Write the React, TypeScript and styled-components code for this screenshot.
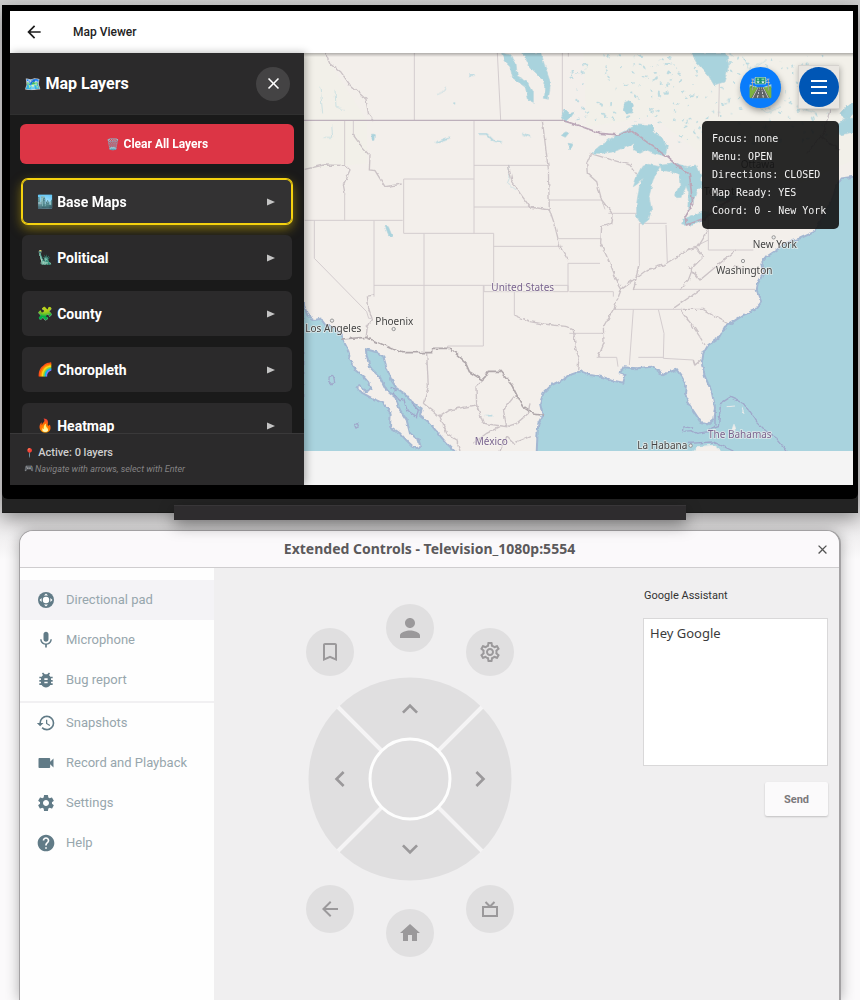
import React from "react";
import styled, { createGlobalStyle } from "styled-components";
import {
  MdMic, MdBugReport, MdHistory, MdVideocam, MdSettings, MdHelp, MdPerson,
  MdBookmarkBorder, MdOutlineSettings, MdHome, MdArrowBack, MdClose,
  MdKeyboardArrowUp, MdKeyboardArrowDown, MdKeyboardArrowLeft, MdKeyboardArrowRight,
} from "react-icons/md";

const GlobalStyle = createGlobalStyle`
  * { box-sizing: border-box; }
  body { margin: 0; background: #fafafa; font-family: Roboto, "Noto Sans", sans-serif; }
  button { font: inherit; border: 0; padding: 0; cursor: pointer; }
  h1, h2, p { margin: 0; padding: 0; }
`;

const Page = styled.div`
  display: flex;
  flex-direction: column;
  min-height: 100vh;
  padding-top: 5px;
  background: linear-gradient(#cfcfcf, #dcdadb 60px, #dcdadb 490px, #fbfafb 560px);
`;

/* ---------- television ---------- */

const Television = styled.section`
  margin: 0 2px;
  background: #232323;
  border-bottom: 1px solid #1b1b1b;
  padding-bottom: 13px;
  box-shadow: 0 6px 18px rgba(0, 0, 0, 0.38);
`;

const Bezel = styled.div`
  background: #000;
  padding: 6px 5px 14px 8px;
  border-radius: 0 0 6px 6px;
`;

const Stand = styled.div`
  position: relative;
  flex: none;
  width: calc(60% - 4px);
  height: 15px;
  margin: -8px auto 10px;
  background: #2e2c2e;
  border-top: 1px solid #383638;
  box-shadow: 0 5px 16px rgba(0, 0, 0, 0.4);
`;

const AppBar = styled.header`
  display: flex;
  align-items: center;
  gap: 29px;
  height: 42px;
  padding-left: 14px;
  background: #fff;
  color: #222;
`;

const BackButton = styled.button`
  display: flex;
  background: none;
  color: #1c1c1c;
  font-size: 20px;
`;

const AppTitle = styled.h1`
  font-size: 12px;
  font-weight: 500;
  line-height: 18px;
`;

const Viewer = styled.div`
  display: flex;
  height: 432px;
`;

const Drawer = styled.aside`
  position: relative;
  z-index: 1;
  flex: none;
  display: flex;
  flex-direction: column;
  width: 294px;
  background: #1a1a1a;
  color: #fff;
  box-shadow: 2px 0 8px rgba(0, 0, 0, 0.3);
`;

const DrawerHeader = styled.div`
  flex: none;
  display: flex;
  align-items: center;
  justify-content: space-between;
  height: 62px;
  padding: 0 14px;
  background: #2b2a2b;
  border-bottom: 1px solid #303030;
`;

const DrawerTitle = styled.h2`
  display: flex;
  align-items: center;
  gap: 4px;
  font-size: 16px;
  line-height: 20px;
  font-weight: 700;
`;

const CloseDrawer = styled.button`
  display: flex;
  align-items: center;
  justify-content: center;
  width: 34px;
  height: 34px;
  border-radius: 50%;
  background: #444344;
  color: #fff;
  font-size: 19px;
`;

const LayerList = styled.div`
  flex: 1;
  min-height: 0;
  overflow: hidden;
  display: flex;
  flex-direction: column;
  gap: 11px;
  padding: 9px 10px 0;
`;

const Emoji = styled.span<{ $size: number }>`
  display: inline-block;
  font-family: "Noto Color Emoji", sans-serif;
  font-size: ${(p) => p.$size}px;
  font-style: normal;
`;

const ClearButton = styled.button`
  flex: none;
  display: flex;
  align-items: center;
  justify-content: center;
  gap: 4px;
  height: 40px;
  margin-bottom: 4px;
  border-radius: 6px;
  background: #dc3545;
  color: #fff;
  font-size: 12px;
  font-weight: 700;
`;

const LayerButton = styled.button<{ $focused?: boolean }>`
  flex: none;
  display: flex;
  align-items: center;
  gap: 4px;
  height: 45px;
  margin: 0 2px;
  padding: 0 17px 0 15px;
  border-radius: 6px;
  background: ${(p) => (p.$focused ? "#333233" : "#2b2a2b")};
  box-shadow: ${(p) =>
    p.$focused
      ? "inset 0 0 0 1px #f5d20f, 0 0 0 1px #f5d20f, 0 4px 12px rgba(255, 215, 0, 0.5)"
      : "none"};
  color: #fff;
  font-size: 14px;
  font-weight: 700;
`;

const Caret = styled.svg`
  width: 8px;
  height: 8px;
  margin-left: auto;
  fill: #c4c4c4;
`;

const DrawerFooter = styled.div`
  flex: none;
  display: flex;
  flex-direction: column;
  gap: 2px;
  height: 52px;
  padding: 12px 14px 0;
  background: #2b2a2b;
  border-top: 1px solid #3a393a;
`;

const ActiveCount = styled.p`
  display: flex;
  align-items: center;
  gap: 3px;
  font-size: 11px;
  line-height: 14px;
  font-weight: 500;
  color: #cfcfcf;
`;

const NavHint = styled.p`
  display: flex;
  align-items: center;
  gap: 1px;
  font-size: 9px;
  line-height: 14px;
  font-style: italic;
  color: #858485;
`;

const MapArea = styled.main`
  position: relative;
  flex: 1;
  min-width: 0;
  background: #f4f4f4;

  &::before {
    content: "";
    position: absolute;
    inset: 0 0 auto;
    height: 4px;
    background: linear-gradient(rgba(0, 0, 0, 0.28), rgba(0, 0, 0, 0));
  }
`;

const MapCanvas = styled.svg`
  display: block;
  width: 100%;
  height: 398px;
`;

const MapTools = styled.div`
  position: absolute;
  top: 12px;
  right: 14px;
  display: flex;
  flex-direction: column;
  align-items: flex-end;
  gap: 12px;
`;

const ToolRow = styled.div`
  display: flex;
  align-items: center;
  gap: 17px;
`;

const DirectionsButton = styled.button`
  display: flex;
  align-items: center;
  justify-content: center;
  width: 41px;
  height: 41px;
  border-radius: 50%;
  background: #0a7cfb;
  box-shadow: 1px 3px 6px rgba(0, 0, 0, 0.35);
`;

const MenuFrame = styled.div`
  padding: 1px 0;
  border: 1px solid #d5d2ce;
  border-right: 0;
  background: #e9e6e1;
  box-shadow: 1px 2px 6px rgba(0, 0, 0, 0.3);
`;

const MenuButton = styled.button`
  display: flex;
  align-items: center;
  justify-content: center;
  width: 40px;
  height: 40px;
  border-radius: 50%;
  background: #0056b5;
`;

const DebugPanel = styled.div`
  min-width: 137px;
  padding: 9px 10px;
  border-radius: 5px;
  background: rgba(20, 20, 20, 0.91);
  color: #f2f2f2;
  font-family: "DejaVu Sans Mono", monospace;
  font-size: 10px;
  line-height: 18px;
  white-space: pre;
`;

/* ---------- extended controls window ---------- */

const Window = styled.section`
  flex: 1;
  display: flex;
  flex-direction: column;
  margin: 0 19px;
  border: 1px solid #a3a1a3;
  border-right-width: 2px;
  border-bottom: 0;
  border-radius: 14px 14px 0 0;
  background: #f0eff0;
  overflow: hidden;
  box-shadow: 0 1px 14px rgba(0, 0, 0, 0.3);
`;

const TitleBar = styled.header`
  flex: none;
  display: grid;
  grid-template-columns: 34px 1fr 34px;
  align-items: center;
  height: 37px;
  background: #fbf9fb;
  border-bottom: 1px solid #cfcdcf;
`;

const WindowTitle = styled.h2`
  grid-column: 2;
  text-align: center;
  font-family: "Noto Sans", sans-serif;
  font-size: 14px;
  line-height: 20px;
  font-weight: 700;
  color: #5b595b;
`;

const CloseWindow = styled.button`
  display: flex;
  justify-content: center;
  background: none;
  color: #555;
  font-size: 15px;
`;

const WindowBody = styled.div`
  flex: 1;
  display: flex;
`;

const SideNav = styled.nav`
  flex: none;
  width: 194px;
  padding-top: 12px;
  background: #fefefe;
`;

const NavDivider = styled.hr`
  height: 2px;
  margin: 1px 0 0;
  border: 0;
  background: #f1f0f2;
`;

const NavItem = styled.button<{ $active?: boolean }>`
  display: flex;
  align-items: center;
  gap: 10px;
  width: 100%;
  height: 40px;
  padding-left: 16px;
  background: ${(p) => (p.$active ? "#f4f3f6" : "transparent")};
  color: #97a6ad;

  svg {
    width: 20px;
    height: 20px;
    color: #617b87;
  }
`;

const NavText = styled.span`
  font-size: 13px;
  line-height: 18px;
`;

const Controls = styled.div`
  flex: 1;
  display: flex;
  justify-content: space-between;
  align-items: flex-start;
  padding: 20px 11px 0 92px;
`;

const Remote = styled.div`
  display: flex;
  flex-direction: column;
  align-items: center;
  width: 208px;
  margin-top: 16px;
`;

const KeyRow = styled.div<{ $flip?: boolean }>`
  display: flex;
  justify-content: space-between;
  align-items: ${(p) => (p.$flip ? "flex-start" : "flex-end")};
  width: 100%;
  height: 72px;

  > :nth-child(2) {
    align-self: ${(p) => (p.$flip ? "flex-end" : "flex-start")};
  }
`;

const RoundKey = styled.button<{ $icon: number }>`
  display: flex;
  align-items: center;
  justify-content: center;
  width: 48px;
  height: 48px;
  border-radius: 50%;
  background: #e0dfe0;
  color: #9b999b;
  font-size: ${(p) => p.$icon}px;
`;

const Dial = styled.div`
  position: relative;
  width: 204px;
  height: 204px;
  margin: 1px 0 4px;
`;

const DialFace = styled.svg`
  position: absolute;
  inset: 0;
`;

const DialKeys = styled.div`
  position: relative;
  display: grid;
  grid-template: 60px 80px 60px / 60px 80px 60px;
  grid-template-areas: ". up ." "left ok right" ". down .";
  height: 100%;
  padding: 2px;
`;

const DialKey = styled.button<{ $area: string }>`
  grid-area: ${(p) => p.$area};
  display: flex;
  align-items: center;
  justify-content: center;
  background: none;
  border-radius: 50%;
  color: #9a989a;
  font-size: 32px;
`;

const Assistant = styled.form`
  display: flex;
  flex-direction: column;
  width: 185px;
`;

const AssistantLabel = styled.label`
  margin: 1px 0 15px 1px;
  font-size: 11px;
  line-height: 14px;
  color: #333;
`;

const AssistantInput = styled.textarea`
  height: 148px;
  padding: 5px 6px;
  border: 1px solid #d9d8d9;
  border-radius: 0;
  resize: none;
  outline: 0;
  background: #fff;
  color: #3b3b3b;
  font-family: "Noto Sans", sans-serif;
  font-size: 13px;
  line-height: 18px;
`;

const SendButton = styled.button`
  align-self: flex-end;
  width: 63px;
  height: 34px;
  margin-top: 16px;
  border-radius: 2px;
  background: #fbfafb;
  box-shadow: 0 1px 2px rgba(0, 0, 0, 0.2);
  color: #7b797b;
  font-size: 11px;
  font-weight: 700;
`;

/* ---------- map ---------- */

const MapLabel = styled.text<{ $country?: boolean }>`
  font-family: "Noto Sans", sans-serif;
  font-size: 30px;
  fill: ${(p) => (p.$country ? "#79648f" : "#444")};
  stroke: #f6f3f0;
  stroke-width: 5px;
  stroke-opacity: 0.7;
  paint-order: stroke;
`;

const lakes = [
  "M875 310L900 290L940 260L990 235L1015 222L1055 225L1065 250L1090 265L1102 290L1095 318L1065 310L1040 300L1020 310L1000 300L1005 280L970 295L940 305L910 310Z",
  "M1025 350L1045 343L1080 350L1065 375L1057 400L1047 440L1055 480L1045 510L1025 525L1010 500L1010 460L1018 410L1030 385L1012 402L1000 410L1012 375Z",
  "M1078 343L1120 338L1160 350L1190 345L1205 380L1205 410L1190 422L1178 460L1163 480L1166 430L1158 408L1145 445L1130 446L1124 436L1140 405L1138 375L1110 365L1085 360Z",
  "M1145 522L1150 508L1210 482L1230 490L1215 508L1180 526Z",
  "M1240 440L1300 420L1330 430L1300 450L1250 455Z",
  "M668 8L722 8L735 50L752 100L745 148L733 145L737 110L720 80L690 52Z",
  "M605 10L632 14L648 40L652 78L680 92L700 125L700 157L685 150L676 112L655 96L638 84L630 50L615 36Z",
  "M1172 8L1280 8L1286 50L1272 96L1242 105L1226 78L1212 62L1190 38Z",
  "M975 158L990 150L1000 165L996 188L980 192L970 178Z",
  "M255 528L265 530L278 562L268 560Z",
  "M786 200L796 178L808 190L822 188L810 205L796 216Z",
  "M784 256L800 246L806 250L796 262Z",
  "M804 280L818 282L810 300Z",
  "M215 252L223 254L222 268L216 268Z",
];

const stateLines = `M343 8V210M592 8L602 210M787 8V210M522 212V550M134 212V345M134 430V511M160 212V255
M522 346H745M522 471H690M311 387H522M311 387V550H581V706M14 511H308M43 511V625M222 511V740M372 550V910
M581 589H788M222 706H804V725H552V706M550 706V888H443V895M643 725V795M804 640V725M748 450H905M772 566H905M804 640H900
M808 725H940V740M808 850H908M925 490H1012M905 450L915 478M1018 520H1100M1018 520V640M1098 525L1102 640M1225 480V600H1360M1000 718H1365M940 778H1145M1000 778L988 945M1075 778L1092 850L1090 925L1180 930M890 922H950L954 950M1015 922H1090
M1258 100L1256 200M1185 590L1225 570M805 8V20M43 625L200 785L206 805L216 805`;

const roughLines = `M75 8L90 42L122 65L150 105L198 148L205 190L220 210
M160 255L185 290L210 318L208 360L225 362L255 410L305 402
M14 358L70 345L135 346L150 360L130 405L135 430
M727 212L738 300L745 355L748 480L765 530L780 590L804 630
M690 471L748 480M625 346L635 390L660 430L690 471
M222 735L202 738L206 775L216 805L202 830L198 866
M643 795L690 815L730 822L800 830L820 840L828 900L838 925L832 965
M873 310L860 340L862 370L890 395L905 450L940 495L935 520L905 530L902 580L930 640L950 690L965 715L942 775L910 830L912 880L895 920
M870 310L920 325L990 345L1012 375M1018 640L1000 720M965 715L1000 690L1040 660L1090 645L1140 615L1160 600L1195 590L1225 540
M1185 590L1210 620L1180 650L1165 690L1140 718M1200 720L1120 775M1140 780L1180 830L1215 885M1145 778L1210 778L1290 825
M1180 930L1185 945L1205 928M1165 650L1200 690L1260 640L1310 600M1300 650L1360 660
M380 910L385 1010L370 1060M370 1060L420 1100L450 1080L530 1065L528 1010L550 990M420 1100L440 1150L470 1170L480 1203
M530 1065L550 1120L620 1130L610 1080L650 1030M620 1130L650 1120L685 1090L690 1060M600 1203L620 1160L640 1180L690 1160M520 1180L560 1150L600 1130
M1520 310L1570 250L1590 180M1560 260L1620 300`;

const pacific =
  "M8 755L22 795L45 810L62 806L76 825L100 832L120 848L128 868L142 896L150 925L165 960L190 980L208 1000L214 1018L198 1024L180 1008L170 1012L178 1024L218 1046L250 1060L272 1090L270 1130L300 1150L320 1172L345 1195L362 1190L356 1170L330 1150L320 1110L300 1080L286 1042L260 1022L240 982L210 952L200 920L198 898L215 902L235 908L250 920L262 960L275 992L290 1015L320 1035L335 1055L365 1075L360 1095L385 1115L410 1145L435 1175L470 1210H8Z";
const atlantic =
  "M710 1210L712 1160L715 1120L728 1095L720 1060L730 1030L755 1005L785 990L815 973L842 964L870 975L910 982L940 992L970 998L976 975L960 970L970 952L1010 955L1055 950L1070 960L1090 975L1110 965L1130 960L1145 980L1158 1005L1155 1030L1165 1060L1185 1090L1205 1120L1225 1123L1240 1110L1245 1070L1235 1025L1215 980L1205 940L1210 910L1225 885L1255 865L1275 830L1300 815L1330 795L1365 780L1384 756L1370 720L1374 700L1390 670L1384 640L1400 620L1430 600L1455 580L1500 565L1545 545L1600 440L1610 405L1625 385L1665 380V1210Z";

const cities: { x: number; y: number }[] = [
  { x: 96, y: 812 }, { x: 281, y: 837 }, { x: 1421, y: 562 }, { x: 1329, y: 633 }, { x: 1172, y: 1187 },
];

/* small northern lakes, scattered by a fixed-seed generator */
function scatter(count: number) {
  let seed = 20231;
  const next = () => {
    seed = (seed * 1103515245 + 12345) % 2147483648;
    return (seed >> 8) / 8388608;
  };
  return Array.from({ length: count }, () => {
    const u = next();
    return { x: 810 + u * 780, y: 12 + next() * (u > 0.4 ? 270 : 205), r: 1 + next() * 2.6, tilt: next() * 180 };
  });
}
const ponds = scatter(230);

function NorthAmericaMap() {
  return (
    <MapCanvas viewBox="12 9 1647 1194" preserveAspectRatio="xMidYMid slice" role="img" aria-label="Map of the United States">
      <defs>
        <filter id="rough" x="-5%" y="-5%" width="110%" height="110%">
          <feTurbulence type="fractalNoise" baseFrequency="0.06" numOctaves="2" seed="4" />
          <feDisplacementMap in="SourceGraphic" scale="12" xChannelSelector="R" yChannelSelector="G" />
        </filter>
      </defs>
      <rect x="0" y="0" width="1700" height="1210" fill="#f3efeb" />
      <path d="M12 9H70L200 210V340L12 360ZM850 9H1660V330L1500 400L1240 340L1060 200L860 230Z" fill="#f2f0e9" />
      <g fill="#a9d3dd" filter="url(#rough)">
        {ponds.map((s, i) => (
          <ellipse key={i} cx={s.x} cy={s.y} rx={s.r * 2} ry={s.r} transform={`rotate(${s.tilt} ${s.x} ${s.y})`} opacity=".7" />
        ))}
      </g>
      <g fill="none" stroke="#a9d3dd" strokeWidth="4" filter="url(#rough)">
        <path d="M405 278L430 268L450 262M535 252L560 252L580 272L605 276M667 250L692 260M508 75H524M460 160H468M555 1097H580" />
        <path d="M410 134L435 125L440 108M626 345L630 380L622 400L650 420M60 110L68 190M105 120L108 170L135 180M95 225L98 262L68 262M1500 90L1530 130L1490 170L1550 190M1330 20L1350 60L1400 30M1350 150L1400 190L1440 170" strokeWidth="3" opacity=".5" />
      </g>
      <path d={stateLines} fill="none" stroke="#d3ccce" strokeWidth="3" />
      <path d={roughLines} fill="none" stroke="#cbc3c6" strokeWidth="4" filter="url(#rough)" />
      <path d="M12 211H790" stroke="#bdb0bb" strokeWidth="4" />
      <g filter="url(#rough)">
        <g fill="#a9d3dd" stroke="#b7d5dc" strokeWidth="2">
          {lakes.map((d) => <path key={d} d={d} />)}
          <path d="M1610 225L1640 205L1665 205V245L1620 255ZM1620 190L1640 165L1665 155V190L1635 215Z" />
        </g>
        <g fill="#a9d3de" stroke="#a3b7d2" strokeWidth="6">
          <path d={pacific} />
          <path d={atlantic} />
        </g>
        <g fill="none" stroke="#bba7b8" strokeWidth="5">
          <path d="M790 212L840 228L900 250L960 255L990 240L1060 290L1100 320L1130 345L1168 372L1178 460L1155 500L1160 525L1215 505L1300 440" />
          <path d="M122 867L198 862L305 908H395V895H450L495 935L508 965L548 990L565 964H600L635 1005L668 1070L700 1092L732 1096" stroke="#b0a8ab" />
        </g>
        <g fill="none" stroke="#9fa8cb" strokeWidth="4">
          <path d="M88 978L100 976L104 995L96 1004L86 994ZM164 1126L172 1120L176 1130L168 1134Z" />
          <path d="M1245 1080L1245 1125L1225 1145L1190 1150L1175 1142L1150 1144L1152 1130L1180 1135M1225 1140L1255 1130L1262 1060L1290 1042L1330 1060L1370 1115L1400 1145L1430 1165L1462 1205M1165 1180L1240 1176L1300 1203" />
          <path d="M272 1012L288 1018L280 1032L300 1052L312 1048L320 1080L350 1100L355 1080L335 1060" />
        </g>
        <path d="M1180 1210L1190 1190L1240 1186L1270 1210ZM1296 1142L1302 1120L1308 1142ZM1283 1070L1305 1068M1325 1072L1332 1092" fill="#f3efeb" stroke="#e6eaea" strokeWidth="3" />
      </g>
      {cities.map((c) => (
        <circle key={c.x} cx={c.x} cy={c.y} r="5" fill="#eee" stroke="#888" strokeWidth="2.5" />
      ))}
      <MapLabel x="16" y="846">Los Angeles</MapLabel>
      <MapLabel x="226" y="825">Phoenix</MapLabel>
      <MapLabel x="574" y="723" $country>United States</MapLabel>
      <MapLabel x="524" y="1184" $country>México</MapLabel>
      <MapLabel x="1358" y="594">New York</MapLabel>
      <MapLabel x="1248" y="671">Washington</MapLabel>
      <MapLabel x="1224" y="1165" $country>The Bahamas</MapLabel>
      <MapLabel x="1012" y="1198">La Habana</MapLabel>
      <MapLabel x="1322" y="354">Ottawa</MapLabel>
      <MapLabel x="1212" y="434">Toronto</MapLabel>
    </MapCanvas>
  );
}

const layers = [
  { icon: "🏙️", name: "Base Maps", focused: true },
  { icon: "🗽", name: "Political" },
  { icon: "🧩", name: "County" },
  { icon: "🌈", name: "Choropleth" },
  { icon: "🔥", name: "Heatmap" },
];

function DpadIcon() {
  return (
    <svg viewBox="-1 -1 20 20" aria-hidden="true">
      <circle cx="9" cy="9" r="8" fill="currentColor" />
      <circle cx="9" cy="9" r="3.2" fill="#fff" />
      <path d="M9 2.5L11 4.6H7ZM9 15.5L7 13.4H11ZM2.5 9L4.6 7V11ZM15.5 9L13.4 11V7Z" fill="#fff" />
    </svg>
  );
}

function TvIcon() {
  return (
    <svg width="18" height="18" viewBox="0 0 18 18" fill="none" stroke="currentColor" strokeWidth="2" aria-hidden="true">
      <path d="M2 7H16V16H2ZM4.5 2L9 6.5L13.5 2" />
    </svg>
  );
}

export default function App() {
  return (
    <Page>
      <GlobalStyle />
      <Television>
        <Bezel>
          <AppBar>
            <BackButton aria-label="Back"><MdArrowBack /></BackButton>
            <AppTitle>Map Viewer</AppTitle>
          </AppBar>
          <Viewer>
            <Drawer>
              <DrawerHeader>
                <DrawerTitle><Emoji $size={14}>🗺️</Emoji>Map Layers</DrawerTitle>
                <CloseDrawer aria-label="Close layers"><MdClose /></CloseDrawer>
              </DrawerHeader>
              <LayerList>
                <ClearButton><Emoji $size={11}>🗑️</Emoji>Clear All Layers</ClearButton>
                {layers.map((l) => (
                  <LayerButton key={l.name} $focused={l.focused}>
                    <Emoji $size={13}>{l.icon}</Emoji>
                    {l.name}
                    <Caret viewBox="0 0 8 8"><path d="M0 0.5L8 4L0 7.5Z" /></Caret>
                  </LayerButton>
                ))}
              </LayerList>
              <DrawerFooter>
                <ActiveCount><Emoji $size={9}>📍</Emoji>Active: 0 layers</ActiveCount>
                <NavHint><Emoji $size={8}>🎮</Emoji>Navigate with arrows, select with Enter</NavHint>
              </DrawerFooter>
            </Drawer>
            <MapArea>
              <NorthAmericaMap />
              <MapTools>
                <ToolRow>
                  <DirectionsButton aria-label="Directions"><Emoji $size={20}>🛣️</Emoji></DirectionsButton>
                  <MenuFrame>
                    <MenuButton aria-label="Menu">
                      <svg width="16" height="16" viewBox="0 0 16 16" stroke="#fff" strokeWidth="2">
                        <path d="M0 2H16M0 8H16M0 14H16" />
                      </svg>
                    </MenuButton>
                  </MenuFrame>
                </ToolRow>
                <DebugPanel>{"Focus: none\nMenu: OPEN\nDirections: CLOSED\nMap Ready: YES\nCoord: 0 - New York"}</DebugPanel>
              </MapTools>
            </MapArea>
          </Viewer>
        </Bezel>
      </Television>
      <Stand />
      <Window>
        <TitleBar>
          <WindowTitle>Extended Controls - Television_1080p:5554</WindowTitle>
          <CloseWindow aria-label="Close window"><MdClose /></CloseWindow>
        </TitleBar>
        <WindowBody>
          <SideNav>
            <NavItem $active><DpadIcon /><NavText>Directional pad</NavText></NavItem>
            <NavItem><MdMic /><NavText>Microphone</NavText></NavItem>
            <NavItem><MdBugReport /><NavText>Bug report</NavText></NavItem>
            <NavDivider />
            <NavItem><MdHistory /><NavText>Snapshots</NavText></NavItem>
            <NavItem><MdVideocam /><NavText>Record and Playback</NavText></NavItem>
            <NavItem><MdSettings /><NavText>Settings</NavText></NavItem>
            <NavItem><MdHelp /><NavText>Help</NavText></NavItem>
          </SideNav>
          <Controls>
            <Remote>
              <KeyRow>
                <RoundKey $icon={24} aria-label="Bookmark"><MdBookmarkBorder /></RoundKey>
                <RoundKey $icon={30} aria-label="Profile"><MdPerson /></RoundKey>
                <RoundKey $icon={24} aria-label="Settings"><MdOutlineSettings /></RoundKey>
              </KeyRow>
              <Dial>
                <DialFace viewBox="0 0 204 204">
                  <circle cx="102" cy="102" r="101.5" fill="#e0dfe0" />
                  <path d="M30 30L174 174M174 30L30 174" stroke="#f5f4f5" strokeWidth="4" />
                  <circle cx="102" cy="102" r="40" fill="#e0dfe0" stroke="#fdfdfd" strokeWidth="3" />
                </DialFace>
                <DialKeys>
                  <DialKey $area="up" aria-label="Up"><MdKeyboardArrowUp /></DialKey>
                  <DialKey $area="left" aria-label="Left"><MdKeyboardArrowLeft /></DialKey>
                  <DialKey $area="ok" aria-label="Select" />
                  <DialKey $area="right" aria-label="Right"><MdKeyboardArrowRight /></DialKey>
                  <DialKey $area="down" aria-label="Down"><MdKeyboardArrowDown /></DialKey>
                </DialKeys>
              </Dial>
              <KeyRow $flip>
                <RoundKey $icon={24} aria-label="Back"><MdArrowBack /></RoundKey>
                <RoundKey $icon={24} aria-label="Home"><MdHome /></RoundKey>
                <RoundKey $icon={24} aria-label="TV"><TvIcon /></RoundKey>
              </KeyRow>
            </Remote>
            <Assistant onSubmit={(e) => e.preventDefault()}>
              <AssistantLabel htmlFor="assistant">Google Assistant</AssistantLabel>
              <AssistantInput id="assistant" defaultValue="Hey Google" spellCheck={false} />
              <SendButton type="submit">Send</SendButton>
            </Assistant>
          </Controls>
        </WindowBody>
      </Window>
    </Page>
  );
}
